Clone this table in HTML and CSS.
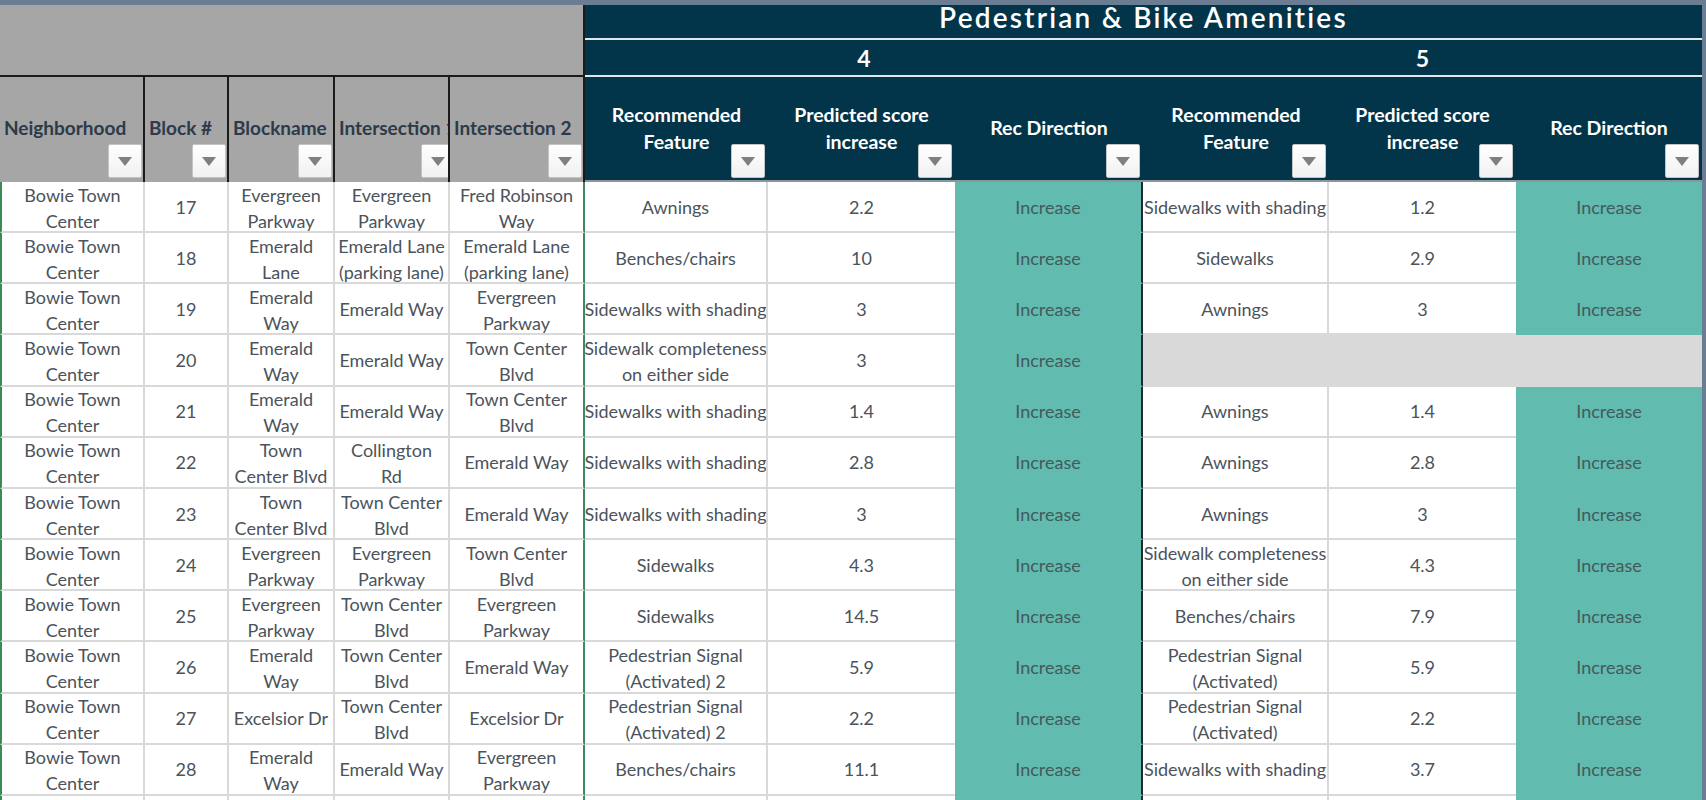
FILE: index.html
```html
<!DOCTYPE html>
<html lang="en">
<head>
<meta charset="utf-8">
<title>Pedestrian &amp; Bike Amenities</title>
<link rel="stylesheet" href="styles.css">
</head>
<body>
<div class="sheet">
  <div class="top">
    <div class="top-left"></div>
    <div class="top-right">
      <div class="title">Pedestrian &amp; Bike Amenities</div>
      <div class="groups">
        <div class="grp">4</div>
        <div class="grp">5</div>
      </div>
    </div>
  </div>

  <div class="row head">
    <div class="hc g"><span class="lbl">Neighborhood</span><span class="dd"></span></div>
    <div class="hc g"><span class="lbl">Block #</span><span class="dd"></span></div>
    <div class="hc g"><span class="lbl">Blockname</span><span class="dd"></span></div>
    <div class="hc g"><span class="lbl">Intersection 1</span><span class="dd"></span></div>
    <div class="hc g"><span class="lbl">Intersection 2</span><span class="dd"></span></div>
    <div class="hc n"><span class="lbl">Recommended<br>Feature</span><span class="dd"></span></div>
    <div class="hc n"><span class="lbl">Predicted score<br>increase</span><span class="dd"></span></div>
    <div class="hc n"><span class="lbl">Rec Direction</span><span class="dd"></span></div>
    <div class="hc n"><span class="lbl">Recommended<br>Feature</span><span class="dd"></span></div>
    <div class="hc n"><span class="lbl">Predicted score<br>increase</span><span class="dd"></span></div>
    <div class="hc n"><span class="lbl">Rec Direction</span><span class="dd"></span></div>
  </div>

  <div class="row">
    <div class="c c1">Bowie Town<br>Center</div><div class="c">17</div><div class="c">Evergreen<br>Parkway</div><div class="c">Evergreen<br>Parkway</div><div class="c c5">Fred Robinson<br>Way</div>
    <div class="c">Awnings</div><div class="c c7">2.2</div><div class="c t c8">Increase</div>
    <div class="c">Sidewalks with shading</div><div class="c c7">1.2</div><div class="c t c11">Increase</div>
  </div>
  <div class="row">
    <div class="c c1">Bowie Town<br>Center</div><div class="c">18</div><div class="c">Emerald<br>Lane</div><div class="c">Emerald Lane<br>(parking lane)</div><div class="c c5">Emerald Lane<br>(parking lane)</div>
    <div class="c">Benches/chairs</div><div class="c c7">10</div><div class="c t c8">Increase</div>
    <div class="c">Sidewalks</div><div class="c c7">2.9</div><div class="c t c11">Increase</div>
  </div>
  <div class="row">
    <div class="c c1">Bowie Town<br>Center</div><div class="c">19</div><div class="c">Emerald<br>Way</div><div class="c">Emerald Way</div><div class="c c5">Evergreen<br>Parkway</div>
    <div class="c">Sidewalks with shading</div><div class="c c7">3</div><div class="c t c8">Increase</div>
    <div class="c">Awnings</div><div class="c c7">3</div><div class="c t c11">Increase</div>
  </div>
  <div class="row">
    <div class="c c1">Bowie Town<br>Center</div><div class="c">20</div><div class="c">Emerald<br>Way</div><div class="c">Emerald Way</div><div class="c c5">Town Center<br>Blvd</div>
    <div class="c">Sidewalk completeness<br>on either side</div><div class="c c7">3</div><div class="c t c8">Increase</div>
    <div class="c empty"></div>
  </div>
  <div class="row">
    <div class="c c1">Bowie Town<br>Center</div><div class="c">21</div><div class="c">Emerald<br>Way</div><div class="c">Emerald Way</div><div class="c c5">Town Center<br>Blvd</div>
    <div class="c">Sidewalks with shading</div><div class="c c7">1.4</div><div class="c t c8">Increase</div>
    <div class="c">Awnings</div><div class="c c7">1.4</div><div class="c t c11">Increase</div>
  </div>
  <div class="row">
    <div class="c c1">Bowie Town<br>Center</div><div class="c">22</div><div class="c">Town<br>Center Blvd</div><div class="c">Collington<br>Rd</div><div class="c c5">Emerald Way</div>
    <div class="c">Sidewalks with shading</div><div class="c c7">2.8</div><div class="c t c8">Increase</div>
    <div class="c">Awnings</div><div class="c c7">2.8</div><div class="c t c11">Increase</div>
  </div>
  <div class="row">
    <div class="c c1">Bowie Town<br>Center</div><div class="c">23</div><div class="c">Town<br>Center Blvd</div><div class="c">Town Center<br>Blvd</div><div class="c c5">Emerald Way</div>
    <div class="c">Sidewalks with shading</div><div class="c c7">3</div><div class="c t c8">Increase</div>
    <div class="c">Awnings</div><div class="c c7">3</div><div class="c t c11">Increase</div>
  </div>
  <div class="row">
    <div class="c c1">Bowie Town<br>Center</div><div class="c">24</div><div class="c">Evergreen<br>Parkway</div><div class="c">Evergreen<br>Parkway</div><div class="c c5">Town Center<br>Blvd</div>
    <div class="c">Sidewalks</div><div class="c c7">4.3</div><div class="c t c8">Increase</div>
    <div class="c">Sidewalk completeness<br>on either side</div><div class="c c7">4.3</div><div class="c t c11">Increase</div>
  </div>
  <div class="row">
    <div class="c c1">Bowie Town<br>Center</div><div class="c">25</div><div class="c">Evergreen<br>Parkway</div><div class="c">Town Center<br>Blvd</div><div class="c c5">Evergreen<br>Parkway</div>
    <div class="c">Sidewalks</div><div class="c c7">14.5</div><div class="c t c8">Increase</div>
    <div class="c">Benches/chairs</div><div class="c c7">7.9</div><div class="c t c11">Increase</div>
  </div>
  <div class="row">
    <div class="c c1">Bowie Town<br>Center</div><div class="c">26</div><div class="c">Emerald<br>Way</div><div class="c">Town Center<br>Blvd</div><div class="c c5">Emerald Way</div>
    <div class="c">Pedestrian Signal<br>(Activated) 2</div><div class="c c7">5.9</div><div class="c t c8">Increase</div>
    <div class="c">Pedestrian Signal<br>(Activated)</div><div class="c c7">5.9</div><div class="c t c11">Increase</div>
  </div>
  <div class="row">
    <div class="c c1">Bowie Town<br>Center</div><div class="c">27</div><div class="c">Excelsior Dr</div><div class="c">Town Center<br>Blvd</div><div class="c c5">Excelsior Dr</div>
    <div class="c">Pedestrian Signal<br>(Activated) 2</div><div class="c c7">2.2</div><div class="c t c8">Increase</div>
    <div class="c">Pedestrian Signal<br>(Activated)</div><div class="c c7">2.2</div><div class="c t c11">Increase</div>
  </div>
  <div class="row">
    <div class="c c1">Bowie Town<br>Center</div><div class="c">28</div><div class="c">Emerald<br>Way</div><div class="c">Emerald Way</div><div class="c c5">Evergreen<br>Parkway</div>
    <div class="c">Benches/chairs</div><div class="c c7">11.1</div><div class="c t c8">Increase</div>
    <div class="c">Sidewalks with shading</div><div class="c c7">3.7</div><div class="c t c11">Increase</div>
  </div>
  <div class="row">
    <div class="c c1"></div><div class="c"></div><div class="c"></div><div class="c"></div><div class="c c5"></div>
    <div class="c"></div><div class="c c7"></div><div class="c t c8"></div>
    <div class="c"></div><div class="c c7"></div><div class="c t c11"></div>
  </div>
</div>
</body>
</html>
```

FILE: styles.css
```css
html, body {
  margin: 0;
  padding: 0;
  height: 800px;
  overflow: hidden;
  background: #6b7d93;
}

body {
  font-family: Lato, "Liberation Sans", sans-serif;
}

.sheet {
  width: 1702px;
  margin-top: 5px;
}

.top {
  display: grid;
  grid-template-columns: 585px 1117px;
  height: 72px;
}

.top-left {
  background: #a6a6a6;
  border-right: 2px solid #1b1b1b;
  border-bottom: 2px solid #1b1b1b;
  box-sizing: border-box;
}

.top-right {
  background: #02344a;
  display: grid;
  grid-template-rows: 35px 37px;
}

.title {
  border-bottom: 2px solid #dfe6ea;
  color: #ffffff;
  font-size: 28px;
  font-weight: 600;
  letter-spacing: 2.2px;
  line-height: 24px;
  text-align: center;
  white-space: nowrap;
}

.groups {
  display: grid;
  grid-template-columns: 558px 559px;
  border-bottom: 2px solid #dfe6ea;
}

.grp {
  display: flex;
  align-items: center;
  justify-content: center;
  color: #ffffff;
  font-size: 23px;
  font-weight: 700;
}

.row {
  display: grid;
  grid-template-columns: 145px 84px 106px 115px 135px 183px 187px 188px 186px 187px 186px;
  height: 51.17px;
}

.row.head {
  height: 105px;
}

.hc {
  display: grid;
  box-sizing: border-box;
  overflow: hidden;
  font-size: 19px;
  font-weight: 700;
}

.hc > * {
  grid-area: 1 / 1;
}

.hc.g {
  background: #a6a6a6;
  border-right: 2px solid #1b1b1b;
  color: #2d3a49;
}

.hc.g .lbl {
  align-self: center;
  justify-self: start;
  padding-left: 4px;
  margin-bottom: 5px;
  white-space: nowrap;
}

.hc.n {
  background: #02344a;
  border-bottom: 2px solid #8b969c;
  color: #ffffff;
  font-size: 19.5px;
}

.hc.n .lbl {
  align-self: center;
  justify-self: center;
  text-align: center;
  line-height: 26.5px;
  white-space: nowrap;
}

.dd {
  align-self: end;
  justify-self: end;
  width: 34px;
  height: 34px;
  box-sizing: border-box;
  background: linear-gradient(#ffffff, #f1f1f1);
  border: 1px solid #c4c4c4;
  border-radius: 2px;
  display: flex;
  align-items: center;
  justify-content: center;
}

.hc.g .dd {
  margin: 0 1px 4px 0;
}

.hc.n .dd {
  margin: 0 3px 2px 0;
}

.dd::after {
  content: "";
  width: 0;
  height: 0;
  border-left: 7px solid transparent;
  border-right: 7px solid transparent;
  border-top: 9px solid #7f7f7f;
}

.c {
  display: flex;
  align-items: center;
  justify-content: center;
  box-sizing: border-box;
  overflow: hidden;
  background: #ffffff;
  border-right: 2px solid #d9d9d9;
  border-bottom: 2px solid #d9d9d9;
  color: #4b535b;
  font-size: 18px;
  line-height: 26px;
  text-align: center;
  white-space: nowrap;
}

.c:has(br) {
  padding-top: 2px;
}

.c1 {
  border-left: 2px solid #3b8a58;
}

.c5 {
  border-right-color: #3b8a58;
}

.c7 {
  border-right: 0;
}

.t {
  background: #62bbaf;
  border-bottom-color: #62bbaf;
  color: #435a5c;
}

.c8 {
  border-right-color: #1e2b32;
}

.c11 {
  border-right: 0;
}

.empty {
  grid-column: span 3;
  background: #d9d9d9;
  border-right: 0;
}
```
